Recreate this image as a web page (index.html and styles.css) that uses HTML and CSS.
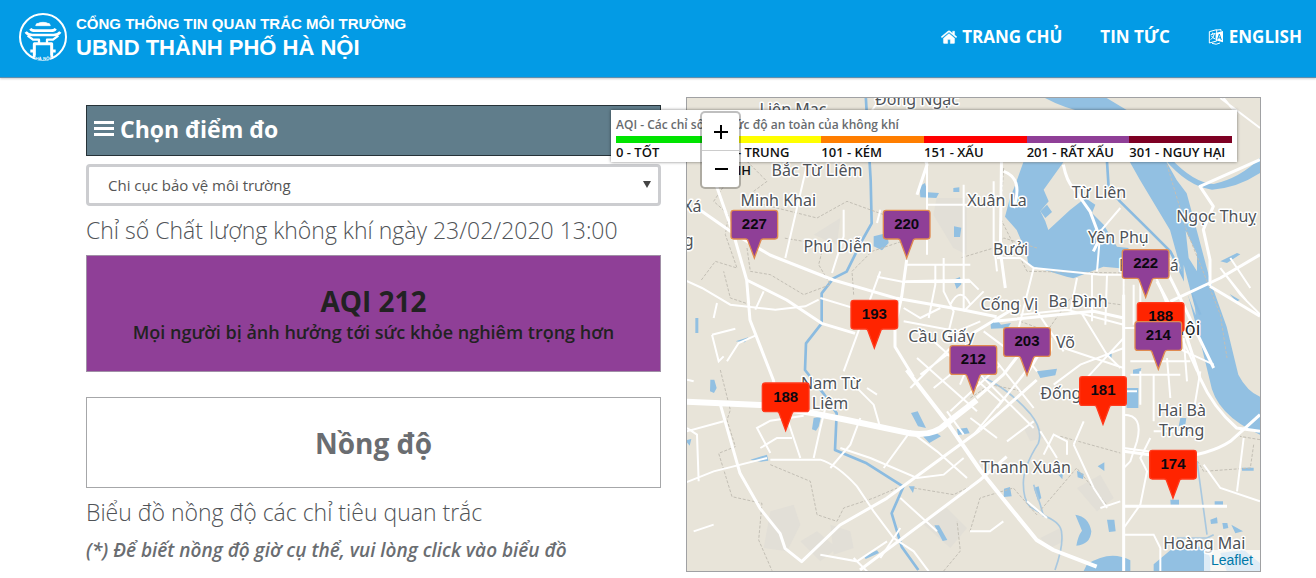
FILE: index.html
```html
<!DOCTYPE html>
<html lang="vi">
<head>
<meta charset="utf-8">
<meta name="viewport" content="width=device-width, initial-scale=1">
<title>Cổng thông tin quan trắc môi trường</title>
<link rel="stylesheet" href="styles.css">
</head>
<body>
<header class="topbar">
  <a class="brand" href="#">
    <svg class="brand-logo" viewBox="0 0 144 144" aria-hidden="true">
      <circle cx="72" cy="72" r="69" fill="none" stroke="#fff" stroke-width="6"/>
      <g fill="none" stroke="#fff" stroke-width="8" stroke-linejoin="round">
        <path d="M50 38q1-8 8-7 4-3 14-3t14 3q7-1 8 7z" fill="#fff" stroke-width="2"/>
        <path d="M34 47q4 6 14 6h48q10 0 14-6"/>
        <path d="M20 57q6 9 20 9h64q14 0 20-9"/>
        <path d="M26 68l16 12h18v11M118 68l-16 12h-18v11" stroke-width="7"/>
        <path d="M46 132V92h52v40M34 114h12M98 114h12" stroke-width="9"/>
      </g>
      <rect x="50" y="127" width="44" height="15" fill="#039be5"/>
      <text class="logo-text" x="72" y="141" text-anchor="middle">HÀ NỘI</text>
    </svg>
    <span class="brand-text">
      <span class="brand-small">CỔNG THÔNG TIN QUAN TRẮC MÔI TRƯỜNG</span>
      <span class="brand-large">UBND THÀNH PHỐ HÀ NỘI</span>
    </span>
  </a>
  <nav class="menu">
    <a href="#"><svg class="menu-icon" viewBox="0 0 16 14" aria-hidden="true"><path d="M8 3.6L2.4 8.2v4.6q0 .6.6.6h3.7V9.6h2.6v3.8H13q.6 0 .6-.6V8.2zM15.9 6.8L13.6 5V1.2h-2v2.1L8.9 1q-.9-.7-1.8 0L.1 6.8l.8 1L8 2l7.1 5.8z" fill="#fff" stroke="#fff" stroke-width=".4"/></svg>TRANG CHỦ</a>
    <a href="#">TIN TỨC</a>
    <a href="#"><svg class="menu-icon menu-icon-lang" viewBox="0 0 48 48" aria-hidden="true"><path d="M4 8l22-6v34L4 42z" fill="none" stroke="#fff" stroke-width="3"/><path d="M8 17l14-4M14 11v5M19 15q-3 12-11 17M10 20q4 8 12 10" fill="none" stroke="#fff" stroke-width="3"/><path d="M23 12l22-6v34l-22-6z" fill="#fff"/><path d="M29 31l5-16 6 18M31 26l7 1" fill="none" stroke="#039be5" stroke-width="3"/><path d="M12 43q13 6 24-1" fill="none" stroke="#fff" stroke-width="3"/><path d="M27 3l12-1v5" fill="none" stroke="#fff" stroke-width="3"/></svg>ENGLISH</a>
  </nav>
</header>

<main class="page">
  <section class="station">
    <h2 class="station-title"><svg class="bars" viewBox="0 0 20 18" aria-hidden="true"><path d="M0 1h20v3H0zM0 7h20v3H0zM0 13h20v3H0z" fill="#fff"/></svg><label for="station">Chọn điểm đo</label></h2>
    <div class="select-wrap">
      <select id="station" class="station-select"><option>Chi cục bảo vệ môi trường</option></select>
      <span class="arrow" aria-hidden="true"></span>
    </div>
    <h3 class="heading">Chỉ số Chất lượng không khí ngày 23/02/2020 13:00</h3>
    <div class="aqi-card">
      <p class="aqi-value">AQI 212</p>
      <p class="aqi-note">Mọi người bị ảnh hưởng tới sức khỏe nghiêm trọng hơn</p>
    </div>
    <div class="level-card">Nồng độ</div>
    <h3 class="heading">Biểu đồ nồng độ các chỉ tiêu quan trắc</h3>
    <p class="hint">(*) Để biết nồng độ giờ cụ thể, vui lòng click vào biểu đồ</p>
  </section>

  <section class="map" aria-label="Bản đồ">
    <svg class="map-canvas" viewBox="0 0 1719 1419" preserveAspectRatio="xMidYMid slice">
      <defs>
        <g id="pin"><path d="M-62-143h124q8 0 8 8v70q0 8-8 8H27q-7 0-8 6L0 0l-19-51q-1-6-8-6h-35q-8 0-8-8v-70q0-8 8-8z"/></g>
      </defs>
      <!-- built-up areas -->
      <g class="area">
        <path d="M749 300h90v170l-40-20-60-100zM380 410l80-50-10 80zM250 1240l70-20 20 60-40 80-70-10zM340 1330l50-30 60 50-50 40zM430 1280l60 20 10 50-60 20zM700 1270l80-40 60 60-50 60z"/>
        <path d="M1170 1170l70-40 40 70-50 40zM1010 990l40-20 20 50-40 10zM1060 1320l60-30 10 40-40 20z"/>
      </g>
      <!-- rivers and lakes -->
      <g class="water">
        <path d="M1074 0Q1130 30 1200 45L1260 130L1329 193L1359 246L1449 396L1499 576L1539 726L1569 850Q1585 950 1719 1010V896Q1680 880 1654 830L1619 686L1569 546L1529 396L1499 286L1469 246L1439 193L1380 100L1319 36L1259 0z"/>
        <path d="M1009 193L985 260L969 300L954 356L989 396L1019 466L1024 501L1139 536L1159 541L1249 506L1299 511L1325 450L1290 446L1250 380L1215 345L1225 320L1195 300L1149 336L1084 396L1075 370L1060 340L1085 310L1070 275L1129 193z"/>
        <path d="M1060 340l20-20 15 22-20 18z"/>
        <path d="M1450 180Q1520 255 1580 258Q1660 240 1719 180V225Q1650 270 1575 275Q1500 265 1430 180z"/>
        <path d="M560 415l40-10 5 30-20 22-25-12zM698 265l16-10 8 28 34 2-8 15-48-2zM799 270l18-2v14h-18zM801 385l22 4-4 28h-18zM799 545l20-8 4 22-14 14z"/>
        <path d="M25 660h9v45h-9zM146 730l38-12-10 15zM70 845h12l7 25-8 15-12-5zM380 960l22-4-7 30-8 12-12-4zM190 1085l50-15 4 18-22 3zM-5 1027l18-4-5 20zM530 1375l40-18 6 8-40 18zM742 1282h14l25 44-14 3zM665 1165h18l-5 20z"/>
        <path d="M672 945l20-5 25 50-24-5zM708 1015l40-10 14 10-35 20zM810 993l30-4 8 17-35 5z"/>
        <path d="M910 670l20-5 12 15 30-5-10 15-50 2zM1050 820l60-8-5 20-45 8zM1260 770l15-8-2 20zM1338 815l25-5-5 20h-20zM1314 870h40v60h-35zM1480 960h18l-3 20-20 5z"/>
        <path d="M1232 1105l20-12v26zM1110 1125l18-3-2 22zM1170 1118l20 10-2 15-16-5zM951 1172l18-5 5 28-24 2zM1040 1170l15-5 8 35-10 8z"/>
        <path d="M1165 1250q40 5 48 50-3 40-45 43 5-30 17-45zM1260 1265h22l4 35-20 2zM1450 1205h26v15h-25zM1583 1210h25v10h-25zM1570 1265l20-7 2 18-20 2zM1606 1275h15l3 15-15 3zM1633 1280l35 20-23 6z"/>
        <path d="M1190 1419l10-20q70-45 130-12v32zM1400 1419v-20l50-42 100-12 20 34v40zM1600 1365l70-10 49 40v24h-100zM1665 1109h35v9h-35zM1600 490l50-25 10 4-40 26zM1628 588l30 18-10 5z"/>
      </g>
      <g class="river">
        <path d="M536-10l15 256 3 130-28 50-47 95-40 20-35 45v90l-47 60-3 80 55 70 40 60-5 110 95 40 110 70-35 80 30 100 50 70"/>
        <path d="M1260 190l5 80 34 40 91 90 60 60 50 100 40 90"/>
      </g>
      <g class="canal">
        <path d="M849 826q90 20 180 120 40 50 25 90-45 70-45 120 0 50 20 70l50 30q45 20 45 50 5 40-20 110M1040 1160l20 60 10 36M1530 1090l30 220M1470 1320h90l20-10"/>
      </g>
      <path d="M1496 398l34 70v52l-25-40zM1490 500l34 130 2 22-35-90z" class="land"/>
      <!-- boundaries -->
      <g class="border">
        <path d="M-10 130l100 50 30 70-40 60 45 40-10 60 35 100-65-20-45 60M180 190l60 60-40 30 30 40 160 40 90-50 110 40M180 450l10 70 60 10 100 60 80-30-35-60 15-60-120-20M500 590l-5-70 60-60 90-30 60-60M190 620l-60-20-20-80"/>
        <path d="M100 816l30 120-10 30 25 80-50 20 40 130 90 20-10 110 40 92M250 1100l120 50 20 100 60 20 20-40 90-30 70-30M680 1170l120 20 60-30M770 1419l50-60-10-90M849 1300l30-100 100-30 70 80 120-140 90 110"/>
        <path d="M1700 1040l-10 70-140 10-30-50M1719 1025l-60-10M1120 1015l180 50M850 900l60-40 100 20M950 210l-10 150 80 160 290 5v120M1300 620l-150-20-70 100-80-30M1050 450l-100-30-30 30-100 30M1440 200l60 200 100 250 20 130"/>
      </g>
      <!-- minor streets -->
      <g class="street">
        <path d="M360 200L295 480M470 335v80l-35 110M-20 540l65 30 85 50 135 15 90-10 40-20M80 660l10-45M205 635l25-55M400 600l100 30 50 60M580 335l-10 40M580 520l-110 300M75 710l20 80 15-15M75 710l70-18M120 790l35-55 50-22M570 536l80 16h200"/>
        <path d="M-20 1005l130-35M-20 1160l100-40 160-40M20 850l-20-5M0 990l30 20 5 140M250 1065l-40-75 40-22 100-15M220 1050l50-30h45M250 1085h150q50 15 110 80l50 75 60 80 60 40 60 80M300 960l40 120M380 1080l20-90 20-80M430 1110l60-70 30-80"/>
        <path d="M500 860l60 60 20 70M540 870l30 20M460 1050l90 30 140 60 80-10 60-50M590 1110l80-110 80 60 90 80M640 1200l110 100M580 1380l60-90M400 1370l110 20 90-60M500 1380l50 50"/>
        <path d="M720 190v280M660 500h190M655 550l190-5 30 30M770 480v100l30 60-20 80M745 500v60l-20 100M650 630l50 30 60-30M790 620q30-60 60 0M830 640l60-60M650 670l160 30 70-30M860 320h-140M830 260v380"/>
        <path d="M700 830l80-60 90 40M740 870l150-120M790 940l150-140M690 780l180 160M740 730l200 180M670 870l120-120M890 700l80 60M870 820l170 170M920 780l120 150M930 930l140-180M860 1010l150-180M850 960l80 60M960 700l90 120M960 1030l80-60M830 1010l-50-70"/>
        <path d="M920 250v180l10 90M930 480h70l40 30 200 20h70M1040 510l-50 200M1240 400l-10 120M1240 400l60-70M1170 540l-20 100M1215 530v140M1260 530l-5 150M1310 530v160M1000 650l140-15 170 45M1050 640l80 120M1130 750l180 60M1080 730l-60 100M1190 850l120-130M1100 860l80-60 130-50M1180 640l80 130 40 40"/>
        <path d="M1340 560v120M1360 520v160M1310 690h80M1400 520l40 100 90 200M1330 790h180M1330 830h150M1360 820v100M1400 830v140M1440 780l10 120M1490 720l10 130M1450 740l130 60M1310 950q60 0 40 80l-20 60-20 20M1400 1000h60l90 10M1310 880h40M1310 1050l150 20M1390 1020l-30 60 20 40-20 100-50 70M1540 820l-20 120"/>
        <path d="M1060 1000l50 80M1070 1070l30-60 40 20v40M1160 1040l60 130 40 60M1160 1040l30-70M1310 1310h90l20 40v69M1550 1100l50 70 119 40M1650 1180l20-160M1240 1230l60-20"/>
        <path d="M1600 510l60 80 60 60M1630 480l60 90M1600 510l80 100M1650 50l-40-50M1719 90l-119-90"/>
        <path d="M20 1300l60-20M1020 1210l60 50M849 1300h60l40-30M580 0l-60 90M420 20l-40 80M1240 60l60 30M849 790l-30 70"/>
      </g>
      <!-- main roads -->
      <g class="road">
        <path d="M39 336l100 70 110 65 190 75 190 55 200 35 100 20M80 240l60 170 39 136 10 120 70 180 8 40M659 486l-15 110-20 90v60l55 90M945 60l-5 400 15 110M690 290l30-90-20-60"/>
        <path d="M99 916l60 210 60 105 60 75 15 45 50 40 115-110 140-80 280-205M519 1416l360-270 80-70M1310 590v829M1310 1225h310"/>
        <path d="M1000 620l-150 90M920 670l300-30 90 20M879 996l170-150M869 900l80-70 70-90"/>
        <path d="M950 220q60 20 30 110M1129 200q10 50 30 70l50 70 30 80-20 40M1430 500l40 80 110 230M1450 610l150-70 119-70M1719 1000l-70-10q-70-60-110-150L1500 720l-90-170"/>
        <path d="M1569 565v-80l-20-90 30-70-40-60 180-80M1569 565l150 90M780 130l-60 60M1310 1060l150 20q110-10 170-50l89-80"/>
        <path d="M179 546l120 60 105 70 100 30"/>
      </g>
      <g class="highway">
        <path d="M-20 910l240 11 160 25 100 20 190 40q70 10 109-30l90-70"/>
      </g>
      <g class="avenue">
        <path d="M659 816l120 155 100 145 80 100 90 110 50 30 130 50"/>
      </g>
      <!-- place names -->
      <g class="place">
        <text x="318" y="51" text-anchor="middle">Liên Mạc</text>
        <text x="690" y="20" text-anchor="middle">Đông Ngạc</text>
        <text x="390" y="235" text-anchor="middle">Bắc Từ Liêm</text>
        <text x="274" y="323" text-anchor="middle">Minh Khai</text>
        <text x="-12" y="343">Xá</text>
        <text x="-10" y="445">g</text>
        <text x="452" y="461" text-anchor="middle">Phú Diễn</text>
        <text x="930" y="325" text-anchor="middle">Xuân La</text>
        <text x="1236" y="301" text-anchor="middle">Từ Liên</text>
        <text x="1588" y="372" text-anchor="middle">Ngọc Thuỵ</text>
        <text x="1294" y="436" text-anchor="middle">Yên Phụ</text>
        <text x="971" y="472" text-anchor="middle">Bưởi</text>
        <text x="1475" y="518" text-anchor="end">Phúc Xá</text>
        <text x="967" y="635" text-anchor="middle">Cống Vị</text>
        <text x="1173" y="628" text-anchor="middle">Ba Đình</text>
        <text x="763" y="733" text-anchor="middle">Cầu Giấy</text>
        <text x="1164" y="750" text-anchor="end">Giảng Võ</text>
        <text class="city" x="1540" y="712" text-anchor="end">Hà Nội</text>
        <text x="431" y="872" text-anchor="middle">Nam Từ</text>
        <text x="429" y="934" text-anchor="middle">Liêm</text>
        <text x="1060" y="903">Đống Đa</text>
        <text x="1484" y="953" text-anchor="middle">Hai Bà</text>
        <text x="1484" y="1014" text-anchor="middle">Trưng</text>
        <text x="1017" y="1125" text-anchor="middle">Thanh Xuân</text>
        <text x="1552" y="1352" text-anchor="middle">Hoàng Mai</text>
      </g>
      <!-- stations -->
      <g class="pin pin-purple" transform="translate(202 480)"><use href="#pin"/><text y="-87">227</text></g>
      <g class="pin pin-purple" transform="translate(659 480)"><use href="#pin"/><text y="-87">220</text></g>
      <g class="pin pin-red" transform="translate(562 750)"><use href="#pin"/><text y="-87">193</text></g>
      <g class="pin pin-purple" transform="translate(1376 598)"><use href="#pin"/><text y="-87">222</text></g>
      <g class="pin pin-red" transform="translate(1421 757)"><use href="#pin"/><text y="-87">188</text></g>
      <g class="pin pin-purple" transform="translate(1414 814)"><use href="#pin"/><text y="-87">214</text></g>
      <g class="pin pin-purple" transform="translate(1020 832)"><use href="#pin"/><text y="-87">203</text></g>
      <g class="pin pin-purple" transform="translate(859 886)"><use href="#pin"/><text y="-87">212</text></g>
      <g class="pin pin-red" transform="translate(296 998)"><use href="#pin"/><text y="-87">188</text></g>
      <g class="pin pin-red" transform="translate(1248 979)"><use href="#pin"/><text y="-87">181</text></g>
      <g class="pin pin-red" transform="translate(1458 1200)"><use href="#pin"/><text y="-87">174</text></g>
    </svg>

    <div class="legend">
      <div class="legend-title">AQI - Các chỉ số và mức độ an toàn của không khí</div>
      <ul class="legend-scale">
        <li class="good">0 - TỐT</li>
        <li class="moderate">51 - TRUNG BÌNH</li>
        <li class="poor">101 - KÉM</li>
        <li class="bad">151 - XẤU</li>
        <li class="very-bad">201 - RẤT XẤU</li>
        <li class="hazard">301 - NGUY HẠI</li>
      </ul>
    </div>
    <div class="zoom">
      <button type="button" aria-label="Phóng to"><svg viewBox="0 0 16 16" aria-hidden="true"><path d="M8 1v14M1 8h14"/></svg></button>
      <button type="button" aria-label="Thu nhỏ"><svg viewBox="0 0 16 16" aria-hidden="true"><path d="M2 8h13"/></svg></button>
    </div>
    <a class="attribution" href="#">Leaflet</a>
  </section>
</main>
</body>
</html>
```
FILE: styles.css
```css
* {
  box-sizing: border-box;
}

body {
  margin: 0;
  background: #fff;
  color: #6a6d71;
  font-family: "Open Sans", "Noto Sans", sans-serif;
  font-size: 16px;
}

h2, h3, p, ul {
  margin: 0;
  padding: 0;
}

.topbar {
  display: flex;
  align-items: center;
  justify-content: space-between;
  height: 78px;
  padding: 0 14px 4px 19px;
  background: #039be5;
  border-bottom: 1px solid #5f8fae;
  box-shadow: 0 1px 2px rgba(0, 0, 0, 0.2);
}

.brand {
  display: flex;
  align-items: center;
  gap: 9px;
  color: #fff;
  text-decoration: none;
  font-family: "Liberation Sans", Arial, sans-serif;
  font-weight: 700;
}

.brand-logo {
  width: 48px;
  height: 48px;
}

.logo-text {
  fill: #fff;
  font-size: 13px;
}

.brand-text {
  display: flex;
  flex-direction: column;
}

.brand-small {
  font-size: 15px;
  line-height: 22px;
}

.brand-large {
  font-size: 22px;
  line-height: 25px;
}

.menu {
  display: flex;
  gap: 38px;
}

.menu a {
  display: flex;
  align-items: center;
  gap: 5px;
  color: #fff;
  font-size: 17px;
  font-weight: 700;
  text-decoration: none;
}

.menu-icon {
  width: 16px;
  height: 14px;
}

.menu-icon-lang {
  height: 16px;
}

.page {
  display: grid;
  grid-template-columns: 1fr 1fr;
  gap: 25px;
  padding: 19px 55px 6px 86px;
}

.station {
  padding-top: 8px;
}

.station-title {
  display: flex;
  align-items: center;
  gap: 6px;
  height: 51px;
  padding: 0 7px 4px;
  border: 1px solid #263238;
  background: #607d8b;
  color: #fff;
  font-size: 23px;
  font-weight: 700;
}

.bars {
  width: 20px;
  height: 18px;
}

.select-wrap {
  position: relative;
  margin-top: 8px;
}

.station-select {
  display: block;
  width: 100%;
  height: 42px;
  padding: 0 19px;
  appearance: none;
  border: 3px solid #cccdd0;
  border-radius: 4px;
  background: #fff;
  color: #555;
  font: 15px "Open Sans", "Noto Sans", sans-serif;
}

.arrow {
  position: absolute;
  top: 17px;
  right: 10px;
  border: 4px solid transparent;
  border-top: 7px solid #444;
  border-bottom: 0;
}

.heading {
  color: #505357;
  font-size: 23px;
  font-weight: 300;
  line-height: 49px;
}

.aqi-card {
  display: flex;
  flex-direction: column;
  justify-content: center;
  height: 117px;
  border: 1px solid #a08fa6;
  background: #8f3f97;
  color: #222;
  font-weight: 700;
  text-align: center;
}

.aqi-value {
  font-size: 28px;
  line-height: 36px;
}

.aqi-note {
  font-size: 18px;
  font-weight: 600;
  line-height: 26px;
}

.level-card {
  height: 91px;
  margin-top: 25px;
  border: 1px solid #a6a7a9;
  font-size: 28px;
  font-weight: 700;
  line-height: 90px;
  text-align: center;
}

.hint {
  font-size: 19px;
  font-style: italic;
  font-weight: 600;
  line-height: 26px;
}

.map {
  position: relative;
  height: 475px;
  border: 1px solid #a0a1a3;
  background: #e8e4d9;
}

.map-canvas {
  display: block;
  width: 100%;
  height: 100%;
}

.area {
  fill: #e2dfd7;
}

.water {
  fill: #92c0e2;
}

.land {
  fill: #e8e4d9;
}

.river {
  fill: none;
  stroke: #8bbbe0;
  stroke-width: 8;
  stroke-linejoin: round;
}

.canal {
  fill: none;
  stroke: #a9c8df;
  stroke-width: 5;
  stroke-linejoin: round;
}

.border {
  fill: none;
  stroke: #c3bfb5;
  stroke-width: 3;
  stroke-dasharray: 9 5;
}

.street {
  fill: none;
  stroke: #fff;
  stroke-width: 6;
}

.road {
  fill: none;
  stroke: #fff;
  stroke-width: 9;
  stroke-linejoin: round;
}

.highway {
  fill: none;
  stroke: #fff;
  stroke-width: 18;
  stroke-linejoin: round;
}

.avenue {
  fill: none;
  stroke: #fff;
  stroke-width: 12;
  stroke-linejoin: round;
}

.place {
  fill: #4e5257;
  stroke: #fff;
  stroke-width: 9;
  stroke-linejoin: round;
  paint-order: stroke;
  font-family: "Noto Sans", sans-serif;
  font-size: 48px;
}

.city {
  fill: #222;
  font-size: 54px;
}

.pin {
  stroke-width: 4;
}

.pin text {
  fill: #0c0810;
  stroke: none;
  font-family: "Liberation Sans", Arial, sans-serif;
  font-size: 45px;
  font-weight: 700;
  text-anchor: middle;
}

.pin-purple {
  fill: #8f3f97;
  stroke: #e08a50;
}

.pin-red {
  fill: #ff2400;
  stroke: #ff3a1c;
}

.legend {
  position: absolute;
  top: 12px;
  right: 23px;
  left: -76px;
  height: 52px;
  padding: 5px;
  background: #fff;
  box-shadow: 0 0 3px rgba(0, 0, 0, 0.5);
}

.legend-title {
  color: #686b6e;
  font-size: 12px;
  font-weight: 600;
  line-height: 19px;
}

.legend-scale {
  display: grid;
  grid-template-columns: repeat(6, 1fr);
  margin-top: 2px;
  list-style: none;
  color: #111;
  font-size: 13px;
  font-weight: 600;
  line-height: 18px;
}

.legend-scale li {
  border-top: 7px solid;
  border-top-color: var(--level);
}

.good { --level: #00e400; }
.moderate { --level: #ff0; }
.poor { --level: #ff7e00; }
.bad { --level: #f00; }
.very-bad { --level: #8f3f97; }
.hazard { --level: #7e0023; }

.zoom {
  position: absolute;
  top: 13px;
  left: 13px;
  display: flex;
  flex-direction: column;
  border: 2px solid rgba(0, 0, 0, 0.25);
  border-radius: 5px;
  background: #fff;
  background-clip: padding-box;
}

.zoom button {
  display: grid;
  place-items: center;
  width: 37px;
  height: 37px;
  padding: 0;
  border: 0;
  background: none;
}

.zoom button + button {
  border-top: 1px solid #ccc;
}

.zoom svg {
  width: 16px;
  height: 16px;
  fill: none;
  stroke: #000;
  stroke-width: 2;
}

.attribution {
  position: absolute;
  right: 0;
  bottom: 0;
  padding: 0 7px;
  background: rgba(255, 255, 255, 0.7);
  color: #0078a8;
  font: 14px/21px "Liberation Sans", Arial, sans-serif;
  text-decoration: none;
}
```
